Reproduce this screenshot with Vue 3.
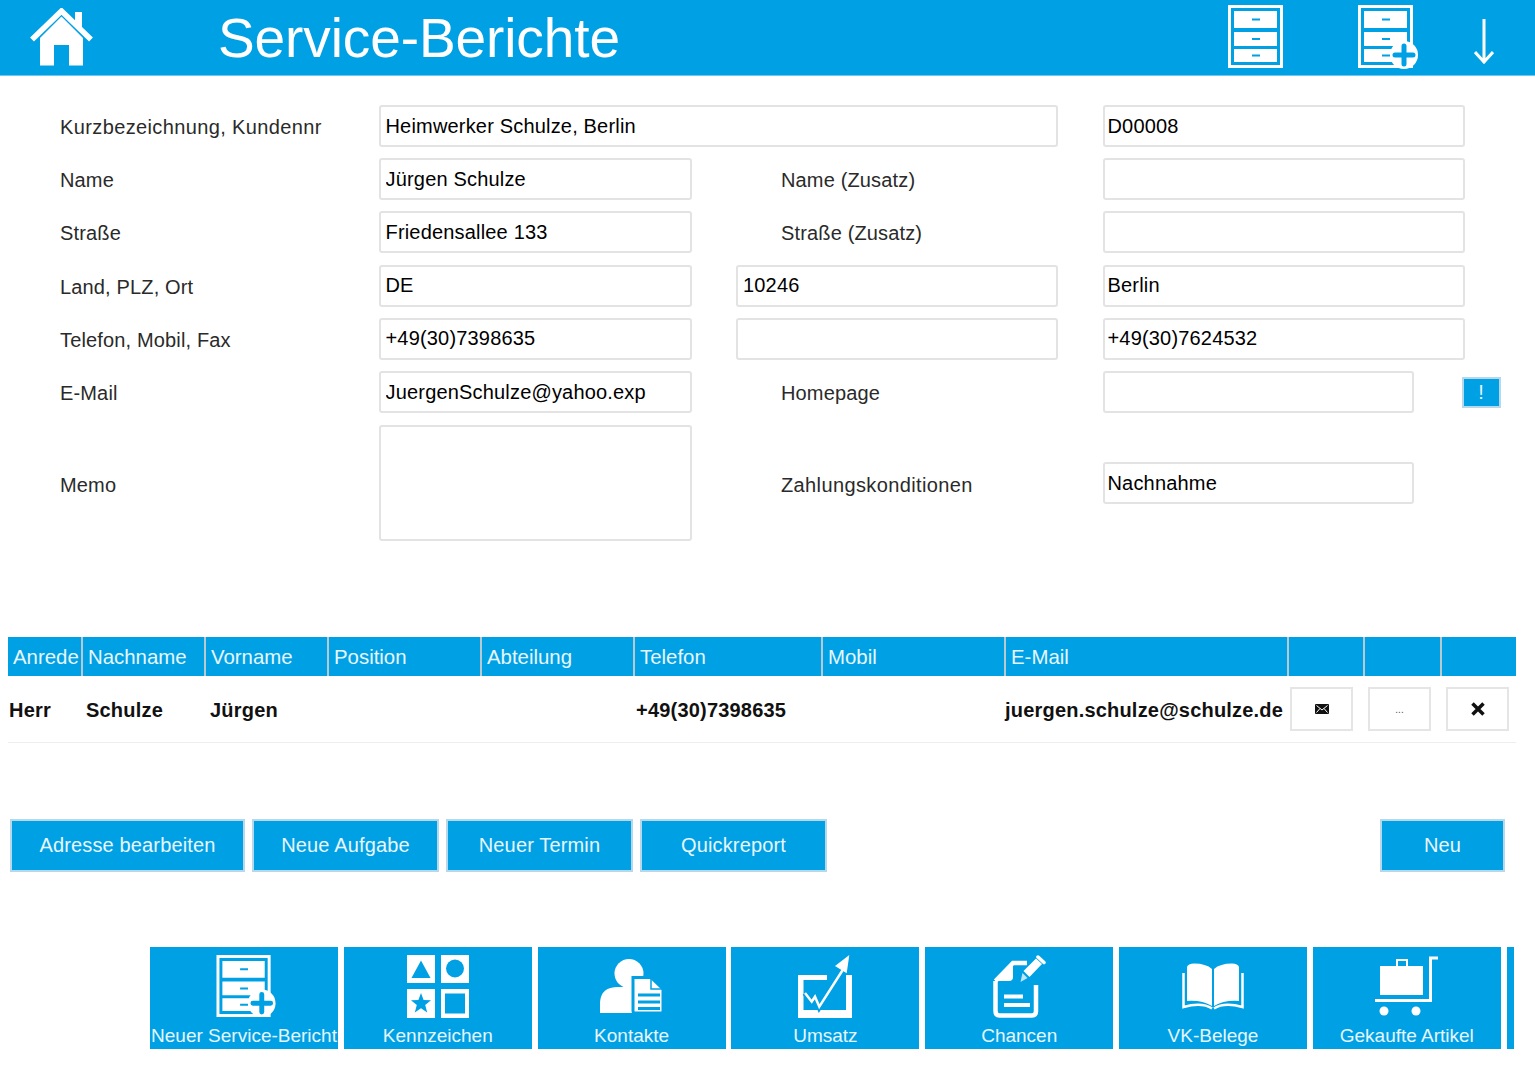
<template>
  <div class="page">
    <!-- Kopfzeile -->
    <header class="top-bar">
      <svg class="home-icon" viewBox="0 0 63 58" width="63" height="58">
        <path d="M10 30 L31.500 8.500 L53 30 V57.500 H39 V37 H24 V57.500 H10 Z" fill="#fff" />
        <path d="M2 31.500 L31.500 3 L61 31.500" fill="none" stroke="#fff" stroke-width="5.500" />
        <path d="M45 4 H52 V21 L45 14 Z" fill="#fff" />
      </svg>
      <h1 class="title">Service-Berichte</h1>
      <svg class="bar-cabinet" viewBox="0 0 55 63" width="55" height="63">
        <rect x="1.500" y="1.500" width="52" height="60" fill="none" stroke="#fff" stroke-width="3" />
        <path d="M6 6 H49 V23 H6 Z M6 27 H49 V41 H6 Z M6 44 H49 V57 H6 Z" fill="#fff" />
        <path d="M24 14.500 H32 M24 34 H32 M24 50.500 H32" stroke="#00a0e4" stroke-width="2" />
      </svg>
      <svg class="bar-cabinet-plus" viewBox="0 0 62 64" width="62" height="64">
        <rect x="1.500" y="1.500" width="52" height="60" fill="none" stroke="#fff" stroke-width="3" />
        <path d="M6 6 H49 V23 H6 Z M6 27 H49 V41 H6 Z M6 44 H49 V57 H6 Z" fill="#fff" />
        <path d="M24 14.500 H32 M24 34 H32 M24 50.500 H32" stroke="#00a0e4" stroke-width="2" />
        <circle cx="46" cy="50" r="14" fill="#fff" />
        <path d="M46 41 V59 M37 50 H55" stroke="#00a0e4" stroke-width="5" stroke-linecap="round" />
      </svg>
      <svg class="bar-arrow" viewBox="0 0 20 46" width="20" height="46">
        <path d="M10 0 V44 M1 33 L10 43 L19 33" fill="none" stroke="#fff" stroke-width="3" />
      </svg>
    </header>

    <!-- Adressformular -->
    <section class="address-form">
      <label class="lbl wide">Kurzbezeichnung, Kundennr</label>
      <input class="field span-2" readonly value="Heimwerker Schulze, Berlin" />
      <input class="field col-c" readonly value="D00008" />

      <label class="lbl">Name</label>
      <input class="field" readonly value="Jürgen Schulze" />
      <label class="lbl lbl-mid">Name (Zusatz)</label>
      <input class="field col-c" readonly />

      <label class="lbl">Straße</label>
      <input class="field" readonly value="Friedensallee 133" />
      <label class="lbl lbl-mid">Straße (Zusatz)</label>
      <input class="field col-c" readonly />

      <label class="lbl">Land, PLZ, Ort</label>
      <input class="field" readonly value="DE" />
      <input class="field" readonly value="10246" />
      <input class="field col-c" readonly value="Berlin" />

      <label class="lbl">Telefon, Mobil, Fax</label>
      <input class="field" readonly value="+49(30)7398635" />
      <input class="field" readonly />
      <input class="field col-c" readonly value="+49(30)7624532" />

      <label class="lbl">E-Mail</label>
      <input class="field" readonly value="JuergenSchulze@yahoo.exp" />
      <label class="lbl lbl-mid">Homepage</label>
      <div class="home-row">
        <input class="field short col-c" readonly />
        <button class="bang">!</button>
      </div>

      <label class="lbl memo-lbl">Memo</label>
      <textarea class="field memo" readonly></textarea>
      <label class="lbl lbl-mid memo-lbl wide">Zahlungskonditionen</label>
      <input class="field short col-c pay" readonly value="Nachnahme" />
    </section>

    <!-- Kontakte -->
    <section class="contacts">
      <div class="contact-head">
        <div v-for="col in columns" :key="col.id" class="head-cell">{{ col.text }}</div>
      </div>
      <div class="contact-row">
        <b>Herr</b>
        <b>Schulze</b>
        <b>Jürgen</b>
        <b>+49(30)7398635</b>
        <b>juergen.schulze@schulze.de</b>
        <button class="row-btn">
          <svg viewBox="0 0 14 10" width="14" height="10">
            <rect width="14" height="10" rx="1" fill="#111" />
            <path d="M1.500 1.500 L7 6 L12.500 1.500 M1.500 8.500 L5 4.500 M12.500 8.500 L9 4.500" fill="none" stroke="#fff" stroke-width="1" />
          </svg>
        </button>
        <button class="row-btn dots">...</button>
        <button class="row-btn">
          <svg viewBox="0 0 14 14" width="14" height="14">
            <path d="M1.500 1.500 L12.500 12.500 M12.500 1.500 L1.500 12.500" stroke="#111" stroke-width="3.500" />
          </svg>
        </button>
      </div>
    </section>

    <!-- Aktionen -->
    <section class="actions">
      <button class="action w-wide">Adresse bearbeiten</button>
      <button class="action">Neue Aufgabe</button>
      <button class="action">Neuer Termin</button>
      <button class="action">Quickreport</button>
      <button class="action new">Neu</button>
    </section>

    <!-- Kacheln -->
    <nav class="tiles">
      <div class="tile">
        <svg class="shift-icon" viewBox="0 0 62 64" width="62" height="64">
          <rect x="1.500" y="1.500" width="52" height="60" fill="none" stroke="#fff" stroke-width="3" />
          <path d="M6 6 H49 V23 H6 Z M6 27 H49 V41 H6 Z M6 44 H49 V57 H6 Z" fill="#fff" />
          <path d="M24 14.500 H32 M24 34 H32 M24 50.500 H32" stroke="#00a0e4" stroke-width="2" />
          <circle cx="46" cy="49" r="14" fill="#fff" />
          <path d="M46 40 V58 M37 49 H55" stroke="#00a0e4" stroke-width="5" stroke-linecap="round" />
        </svg>
        <span>Neuer Service-Bericht</span>
      </div>
      <div class="tile">
        <svg viewBox="0 0 62 63" width="62" height="63">
          <path d="M0 0 H28 V28 H0 Z M34 0 H62 V28 H34 Z M0 34 H28 V63 H0 Z M34 34 H62 V63 H34 Z" fill="#fff" />
          <path d="M14 5.500 L23.500 23 H4.500 Z" fill="#00a0e4" />
          <circle cx="48" cy="13.500" r="9" fill="#00a0e4" />
          <path d="M14 38 L16.600 45 L24 45.300 L18.200 50 L20.200 57.500 L14 53.300 L7.800 57.500 L9.800 50 L4 45.300 L11.400 45 Z" fill="#00a0e4" />
          <rect x="38" y="38.500" width="20" height="20" fill="#00a0e4" />
        </svg>
        <span>Kennzeichen</span>
      </div>
      <div class="tile">
        <svg viewBox="0 0 64 63" width="64" height="63">
          <circle cx="29" cy="18.500" r="14.500" fill="#fff" />
          <path d="M0 58 V47 Q1 32 18 32 H40 V58 Z" fill="#fff" />
          <path d="M33 22.500 H51 L63 34 V56 Q63 58 61 58 H35 Q33 58 33 56 Z" fill="#fff" stroke="#00a0e4" stroke-width="3" />
          <path d="M51 22.500 V34 H63" fill="none" stroke="#00a0e4" stroke-width="1.500" />
          <path d="M38 40 H60 M38 47 H60 M38 53.500 H60" stroke="#00a0e4" stroke-width="3" />
        </svg>
        <span>Kontakte</span>
      </div>
      <div class="tile">
        <svg viewBox="0 0 54 63" width="54" height="63">
          <path d="M0 20 H29 V25 H5.500 V55 H48 V20 H54 V63 H0 Z" fill="#fff" />
          <path d="M7 38 L13.700 46.700 L17 41.700 L21.300 51.700 L46 13" fill="none" stroke="#00a0e4" stroke-width="6" />
          <path d="M7 38 L13.700 46.700 L17 41.700 L21.300 51.700 L46 13" fill="none" stroke="#fff" stroke-width="2.500" />
          <path d="M51.300 0 L37 11 L48.700 18.300 Z" fill="#fff" />
        </svg>
        <span>Umsatz</span>
      </div>
      <div class="tile">
        <svg viewBox="0 0 53 63" width="53" height="63">
          <path d="M2.500 26 L20 8 H34 M43 30 V56 Q43 60.500 39 60.500 H6.500 Q2.500 60.500 2.500 56 V26" fill="none" stroke="#fff" stroke-width="4.500" />
          <path d="M2 26 L20 7 V22 Q20 26 16 26 Z" fill="#fff" />
          <path d="M11 41.500 H30 M11 50 H37" stroke="#fff" stroke-width="4" />
          <path d="M30.500 16 L43 3.500 L49 9 L36.500 22 Z" fill="#fff" />
          <path d="M27.500 27 L29.500 18 L34.500 23 Z" fill="#bfe6f8" />
          <path d="M45 2 L51 7.500" stroke="#fff" stroke-width="3.500" stroke-linecap="round" />
        </svg>
        <span>Chancen</span>
      </div>
      <div class="tile">
        <svg viewBox="0 0 62 63" width="62" height="63">
          <path d="M5 12 Q6 8.500 12 8.500 Q24 8.500 30 14 V51 Q20 45 5 46 Z" fill="#fff" />
          <path d="M57 12 Q56 8.500 50 8.500 Q38 8.500 32 14 V51 Q42 45 57 46 Z" fill="#fff" />
          <path d="M1.500 18 V52 Q20 47 30 53.500 M60.500 18 V52 Q42 47 32 53.500" fill="none" stroke="#fff" stroke-width="2.500" />
        </svg>
        <span>VK-Belege</span>
      </div>
      <div class="tile">
        <svg viewBox="0 0 63 63" width="63" height="63">
          <path d="M5 11 H48 V40 H5 Z" fill="#fff" />
          <path d="M22 11 V5 H32 V11" fill="none" stroke="#fff" stroke-width="2" />
          <path d="M0 45.500 H55.500 V3 H63" fill="none" stroke="#fff" stroke-width="3" />
          <circle cx="9" cy="56" r="4.500" fill="#fff" />
          <circle cx="41" cy="56" r="4.500" fill="#fff" />
        </svg>
        <span>Gekaufte Artikel</span>
      </div>
      <div class="tile sliver"></div>
    </nav>
  </div>
</template>

<script setup>
const columns = [
  { id: 1, text: 'Anrede' },
  { id: 2, text: 'Nachname' },
  { id: 3, text: 'Vorname' },
  { id: 4, text: 'Position' },
  { id: 5, text: 'Abteilung' },
  { id: 6, text: 'Telefon' },
  { id: 7, text: 'Mobil' },
  { id: 8, text: 'E-Mail' },
  { id: 9, text: '' },
  { id: 10, text: '' },
  { id: 11, text: '' }
];
</script>

<style>
body {
  background: #fff;
}
</style>

<style scoped>
.page {
  font-family: "Liberation Sans", Arial, sans-serif;
  color: #111;
  padding-bottom: 26px;
}

/* Kopfzeile */
.top-bar {
  height: 75px;
  background: #00a0e4;
  border-bottom: 1px solid #6cc7f0;
  display: flex;
  align-items: flex-start;
  padding-left: 30px;
  padding-right: 41px;
}

.home-icon {
  margin-top: 8px;
}

.title {
  flex: 1;
  margin: 0 0 0 125px;
  font-size: 55px;
  font-weight: 400;
  letter-spacing: -0.1px;
  line-height: 76px;
  color: #fff;
}

.bar-cabinet {
  margin-top: 5px;
  margin-right: 75px;
}

.bar-cabinet-plus {
  margin-top: 5px;
  margin-right: 54px;
}

.bar-arrow {
  margin-top: 19px;
}

/* Formular */
.address-form {
  display: grid;
  grid-template-columns: 274px 313px 322px 362px;
  grid-template-rows: repeat(6, 42.2px) 117px;
  column-gap: 44.5px;
  row-gap: 11px;
  align-items: center;
  padding: 29px 0 0 60px;
}

.lbl {
  padding-top: 3px;
  font-size: 20px;
  letter-spacing: 0.15px;
  color: #2a2a2a;
  white-space: nowrap;
}

.wide {
  letter-spacing: 0.38px;
}

.lbl-mid {
  padding-left: 45px;
}

.memo-lbl {
  padding-top: 6px;
}

.field {
  box-sizing: border-box;
  width: 100%;
  height: 42px;
  margin: 0;
  padding: 0 5px;
  border: 2px solid #e3e3e3;
  border-radius: 3px;
  background: #fff;
  font-family: inherit;
  font-size: 20px;
  letter-spacing: 0.18px;
  color: #000;
  outline: none;
  resize: none;
}

.col-c {
  padding-left: 3px;
}

.span-2 {
  grid-column: span 2;
}

.home-row {
  display: flex;
  align-items: center;
}

.short {
  width: 311px;
  flex: none;
}

.bang {
  flex: none;
  box-sizing: border-box;
  width: 39px;
  height: 31px;
  margin-left: 48px;
  padding: 0;
  border: 2px solid #b5d8ec;
  background: #00a0e4;
  color: #e8f6fd;
  font-family: inherit;
  font-size: 20px;
}

.memo {
  height: 116px;
  margin-top: 1px;
}

.pay {
  margin-top: 1px;
}

/* Kontakte */
.contacts {
  margin: 96px 19px 0 8px;
}

.contact-head {
  display: grid;
  grid-template-columns: 75px 123px 123px 153px 153px 188px 183px 283px 76px 77px 74px;
  height: 39px;
  background: #00a0e4;
}

.head-cell {
  box-sizing: border-box;
  padding: 2px 0 0 5px;
  border-right: 2px solid #b9c9d2;
  font-size: 20.4px;
  line-height: 37px;
  color: #e6f6fe;
  white-space: nowrap;
}

.head-cell:last-child {
  border-right: none;
}

.contact-row {
  display: grid;
  grid-template-columns: 77px 124px 426px 369px 285px 78px 78px 63px;
  align-items: center;
  height: 67px;
  padding-left: 1px;
  border-bottom: 1px solid #eeeeee;
  font-size: 20px;
  letter-spacing: 0.2px;
  color: #111;
  box-sizing: border-box;
  white-space: nowrap;
}

.contact-row b {
  margin-top: 2px;
}

.row-btn {
  width: 63px;
  height: 44px;
  padding: 0;
  border: 2px solid #e5e5e5;
  background: #fff;
  display: flex;
  align-items: center;
  justify-content: center;
}

.dots {
  font-family: inherit;
  font-size: 10px;
  color: #555;
}

/* Aktionen */
.actions {
  display: flex;
  gap: 7px;
  margin-top: 76px;
  padding: 0 30px 0 10px;
}

.action {
  width: 187px;
  height: 53px;
  padding: 0;
  border: 2px solid #b5d8ec;
  background: #00a0e4;
  color: #e8f6fd;
  font-family: inherit;
  font-size: 20px;
  letter-spacing: 0.15px;
}

.w-wide {
  width: 235px;
}

.new {
  width: 125px;
  margin-left: auto;
}

/* Kacheln */
.tiles {
  display: flex;
  gap: 5.8px;
  margin-top: 75px;
  padding-left: 150px;
}

.tile {
  flex: 0 0 188px;
  height: 102px;
  box-sizing: border-box;
  padding-top: 8px;
  background: #00a0e4;
  color: #e6f6fe;
  display: flex;
  flex-direction: column;
  align-items: center;
  font-size: 19px;
  white-space: nowrap;
}

.tile svg {
  flex: none;
  height: 63px;
}

.tile .shift-icon {
  margin-left: 6px;
}

.tile span {
  margin-top: 6px;
  line-height: 24px;
}

.sliver {
  flex-basis: 7px;
}
</style>
